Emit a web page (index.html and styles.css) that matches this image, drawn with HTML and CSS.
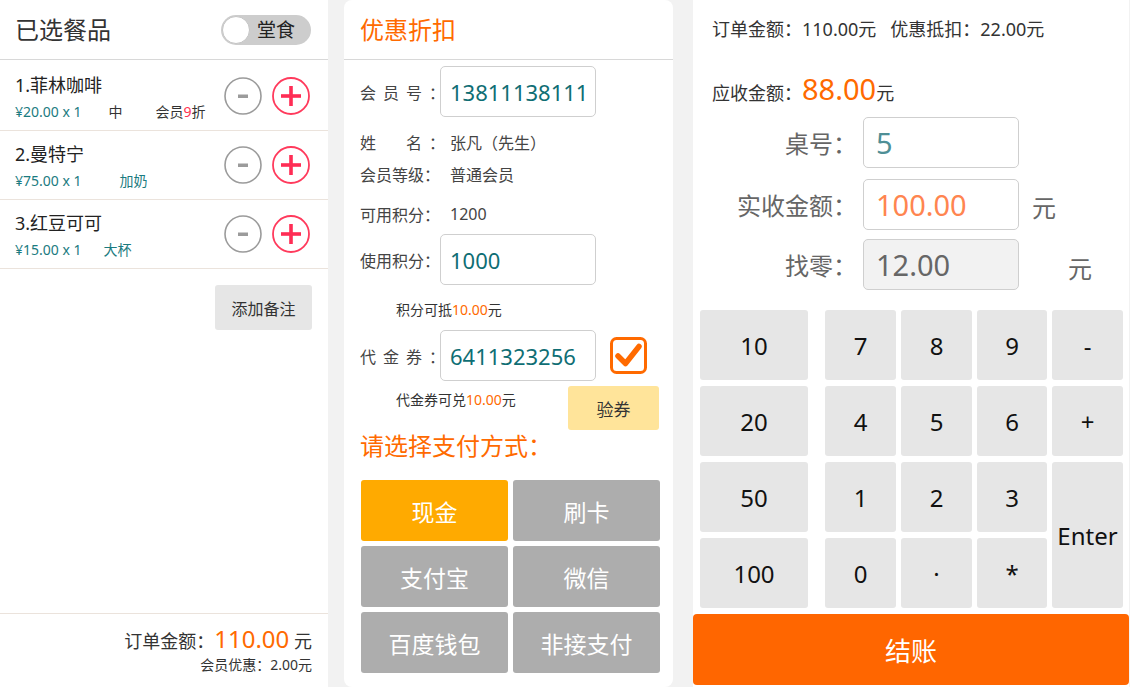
FILE: index.html
```html
<!DOCTYPE html>
<html lang="zh-CN">
<head>
<meta charset="utf-8">
<title>收银结账</title>
<link rel="stylesheet" href="styles.css">
</head>
<body>
<div class="app">
  <section class="panel cart">
    <header class="head">
      <h1 class="title">已选餐品</h1>
      <div class="toggle"><span class="knob"></span><span class="toggle-text">堂食</span></div>
    </header>
    <ul class="items">
      <li class="item">
        <div class="item-info">
          <div class="item-name">1.菲林咖啡</div>
          <div class="item-meta"><span class="price">¥20.00 x 1</span><span class="spec spec-dark">中</span><span class="vip">会员<em>9</em>折</span></div>
        </div>
        <div class="qty">
          <button class="circle minus"><svg width="38" height="38" viewBox="0 0 38 38"><circle cx="19" cy="19" r="18" fill="none" stroke="#9b9b9b" stroke-width="1.6"/><rect x="14" y="17.5" width="10" height="3.5" fill="#9b9b9b"/></svg></button>
          <button class="circle plus"><svg width="38" height="38" viewBox="0 0 38 38"><circle cx="19" cy="19" r="18" fill="none" stroke="#ff3a5c" stroke-width="1.8"/><rect x="9" y="17.2" width="20" height="3.6" fill="#ff2d55"/><rect x="17.2" y="9" width="3.6" height="20" fill="#ff2d55"/></svg></button>
        </div>
      </li>
      <li class="item">
        <div class="item-info">
          <div class="item-name">2.曼特宁</div>
          <div class="item-meta"><span class="price">¥75.00 x 1</span><span class="spec spec-wide">加奶</span></div>
        </div>
        <div class="qty">
          <button class="circle minus"><svg width="38" height="38" viewBox="0 0 38 38"><circle cx="19" cy="19" r="18" fill="none" stroke="#9b9b9b" stroke-width="1.6"/><rect x="14" y="17.5" width="10" height="3.5" fill="#9b9b9b"/></svg></button>
          <button class="circle plus"><svg width="38" height="38" viewBox="0 0 38 38"><circle cx="19" cy="19" r="18" fill="none" stroke="#ff3a5c" stroke-width="1.8"/><rect x="9" y="17.2" width="20" height="3.6" fill="#ff2d55"/><rect x="17.2" y="9" width="3.6" height="20" fill="#ff2d55"/></svg></button>
        </div>
      </li>
      <li class="item">
        <div class="item-info">
          <div class="item-name">3.红豆可可</div>
          <div class="item-meta"><span class="price">¥15.00 x 1</span><span class="spec spec-narrow">大杯</span></div>
        </div>
        <div class="qty">
          <button class="circle minus"><svg width="38" height="38" viewBox="0 0 38 38"><circle cx="19" cy="19" r="18" fill="none" stroke="#9b9b9b" stroke-width="1.6"/><rect x="14" y="17.5" width="10" height="3.5" fill="#9b9b9b"/></svg></button>
          <button class="circle plus"><svg width="38" height="38" viewBox="0 0 38 38"><circle cx="19" cy="19" r="18" fill="none" stroke="#ff3a5c" stroke-width="1.8"/><rect x="9" y="17.2" width="20" height="3.6" fill="#ff2d55"/><rect x="17.2" y="9" width="3.6" height="20" fill="#ff2d55"/></svg></button>
        </div>
      </li>
    </ul>
    <div class="note-row"><button class="note-btn">添加备注</button></div>
    <footer class="cart-foot">
      <div class="foot-total">订单金额<span class="colon">：</span><span class="foot-amount">110.00</span> 元</div>
      <div class="foot-vip">会员优惠<span class="colon">：</span>2.00元</div>
    </footer>
  </section>

  <section class="panel discount">
    <header class="head">
      <h2 class="title orange">优惠折扣</h2>
    </header>
    <div class="disc-body">
      <div class="frow first">
        <span class="flabel"><span class="ls">会员号</span>：</span>
        <input class="finput" type="text" value="13811138111" readonly>
      </div>
      <div class="irow gap9"><span class="ilabel"><span class="ls">姓　名</span>：</span><span>张凡（先生）</span></div>
      <div class="irow"><span class="ilabel">会员等级：</span><span>普通会员</span></div>
      <div class="irow gap8"><span class="ilabel">可用积分：</span><span>1200</span></div>
      <div class="frow gap4">
        <span class="flabel">使用积分：</span>
        <input class="finput" type="text" value="1000" readonly>
      </div>
      <div class="hint hint-points">积分可抵<span class="orange">10.00</span>元</div>
      <div class="frow gap6">
        <span class="flabel"><span class="ls">代金券</span>：</span>
        <input class="finput" type="text" value="6411323256" readonly>
        <span class="check"><svg width="37" height="37" viewBox="0 0 37 37"><rect x="1.5" y="1.5" width="34" height="34" rx="5" fill="none" stroke="#ff6a00" stroke-width="3"/><path d="M8 19 L15.5 26.5 L29 9.5" fill="none" stroke="#ff6a00" stroke-width="5.5" stroke-linecap="round" stroke-linejoin="round"/></svg></span>
      </div>
      <div class="voucher-row">
        <div class="hint">代金券可兑<span class="orange">10.00</span>元</div>
        <button class="verify-btn">验券</button>
      </div>
      <div class="pay-title orange">请选择支付方式：</div>
      <div class="pay-grid">
        <button class="pay active">现金</button>
        <button class="pay">刷卡</button>
        <button class="pay">支付宝</button>
        <button class="pay">微信</button>
        <button class="pay">百度钱包</button>
        <button class="pay">非接支付</button>
      </div>
    </div>
  </section>

  <section class="panel checkout">
    <div class="summary">订单金额<span class="colon">：</span>110.00元<span class="sum-gap">优惠抵扣<span class="colon">：</span>22.00元</span></div>
    <div class="due">应收金额<span class="colon">：</span><span class="due-amount">88.00</span>元</div>
    <div class="crow row-table">
      <span class="clabel">桌号<span class="colon">：</span></span>
      <input class="cinput table-no" type="text" value="5" readonly>
    </div>
    <div class="crow row-paid">
      <span class="clabel">实收金额<span class="colon">：</span></span>
      <input class="cinput paid" type="text" value="100.00" readonly>
      <span class="unit">元</span>
    </div>
    <div class="crow row-change">
      <span class="clabel">找零<span class="colon">：</span></span>
      <input class="cinput change" type="text" value="12.00" readonly>
      <span class="unit unit-far">元</span>
    </div>
    <div class="keypad">
      <button class="key fixed">10</button>
      <button class="key">7</button>
      <button class="key">8</button>
      <button class="key">9</button>
      <button class="key">-</button>
      <button class="key fixed">20</button>
      <button class="key">4</button>
      <button class="key">5</button>
      <button class="key">6</button>
      <button class="key">+</button>
      <button class="key fixed">50</button>
      <button class="key">1</button>
      <button class="key">2</button>
      <button class="key">3</button>
      <button class="key enter">Enter</button>
      <button class="key fixed">100</button>
      <button class="key">0</button>
      <button class="key">·</button>
      <button class="key">*</button>
    </div>
    <button class="pay-btn">结账</button>
  </section>
</div>
</body>
</html>
```

FILE: styles.css
```css
* { box-sizing: border-box; margin: 0; padding: 0; }
html, body { height: 100%; }
body {
  background: #f2f2f2;
  font-family: "Noto Sans", "Noto Sans CJK SC", sans-serif;
  color: #333;
  overflow: hidden;
}
button, input { font-family: inherit; }
button { border: none; cursor: pointer; }
ul { list-style: none; }

.app { display: flex; width: 1130px; height: 687px; }
.panel { background: #fff; height: 687px; }
.orange { color: #ff6a00; }
.colon { font-family: "Noto Sans CJK JP", "Noto Sans CJK SC", sans-serif; }

/* ---------- cart ---------- */
.cart { width: 328px; display: flex; flex-direction: column; }
.head {
  height: 60px;
  border-bottom: 1px solid #d8d8d8;
  display: flex;
  align-items: center;
  justify-content: space-between;
  padding: 0 17px 0 15px;
  flex: none;
}
.title { font-size: 24px; font-weight: normal; line-height: 30px; color: #333; }
.title.orange { color: #ff6a00; }

.toggle {
  width: 90px; height: 30px;
  border-radius: 15px;
  background: #cdcdcd;
  display: flex; align-items: center;
  padding-left: 1px;
}
.knob {
  width: 28px; height: 28px;
  border-radius: 50%;
  background: #fff;
  border: 1px solid #c4c4c4;
}
.toggle-text { font-size: 19px; line-height: 28px; margin-left: 7px; color: #222; }

.items { padding-top: 2px; }
.item {
  height: 69px;
  border-bottom: 1px solid #ebe3dc;
  display: flex;
  align-items: center;
  justify-content: space-between;
  padding: 0 18px 0 15px;
}
.item-info { align-self: flex-start; padding-top: 11px; }
.item-name { font-size: 18px; line-height: 24px; color: #222; }
.item-meta { font-size: 14px; line-height: 20px; margin-top: 5px; color: #333; white-space: nowrap; }
.price { color: #1b7b80; }
.spec { color: #1b7b80; }
.spec-dark { color: #333; margin-left: 27px; }
.spec-wide { margin-left: 38px; }
.spec-narrow { margin-left: 22px; }
.vip { margin-left: 33px; }
.vip em { font-style: normal; color: #ff3355; }

.qty { display: flex; gap: 10px; }
.circle { width: 38px; height: 38px; background: none; display: block; }
.circle svg { display: block; }

.note-row { display: flex; justify-content: flex-end; padding: 16px 16px 0 0; }
.note-btn {
  width: 97px; height: 45px;
  background: #e6e6e6;
  border-radius: 3px;
  font-size: 16px;
  color: #333;
}

.cart-foot {
  margin-top: auto;
  height: 74px;
  border-top: 1px solid #ebe3dc;
  padding: 11px 16px 0 0;
  text-align: right;
}
.foot-total { font-size: 18px; line-height: 28px; color: #333; }
.foot-amount { font-size: 24px; color: #ff6a00; }
.foot-vip { font-size: 14px; line-height: 18px; color: #333; }

/* ---------- discount ---------- */
.discount { width: 329px; margin-left: 16px; border-radius: 8px; display: flex; flex-direction: column; }
.discount .head { padding-left: 16px; }
.disc-body { padding: 0 14px 0 16px; display: flex; flex-direction: column; }

.frow { display: flex; align-items: center; height: 51px; }
.frow.first { margin-top: 6px; }
.gap4 { margin-top: 4px; }
.gap6 { margin-top: 6px; }
.gap8 { margin-top: 8px; }
.gap9 { margin-top: 9px; }
.flabel { width: 80px; flex: none; font-size: 16px; color: #444; white-space: nowrap; }
.ls { letter-spacing: 7px; }
.finput {
  width: 156px; height: 51px;
  border: 1px solid #cfcfcf;
  border-radius: 5px;
  padding-left: 9px;
  font-size: 22px;
  color: #0f6e74;
  background: #fff;
  outline: none;
}
.irow { display: flex; align-items: center; height: 32px; font-size: 16px; color: #444; }
.ilabel { width: 90px; flex: none; white-space: nowrap; }

.hint { font-size: 14px; line-height: 28px; color: #333; padding-left: 36px; }
.hint-points { margin-top: 11px; }
.check { margin-left: 14px; display: block; width: 37px; height: 37px; }
.check svg { display: block; }

.voucher-row { display: flex; justify-content: space-between; align-items: flex-start; margin-top: 5px; height: 44px; }
.verify-btn {
  width: 91px; height: 44px;
  background: #ffe49a;
  border-radius: 3px;
  font-size: 17px;
  color: #333;
}
.pay-title { font-size: 24px; line-height: 32px; }

.pay-grid {
  margin: 18px 0 0 1px;
  display: grid;
  grid-template-columns: 147px 147px;
  grid-auto-rows: 61px;
  gap: 5px;
}
.pay {
  background: #adadad;
  border-radius: 3px;
  color: #fff;
  font-size: 23px;
}
.pay.active { background: #ffaa00; }

/* ---------- checkout ---------- */
.checkout { width: 436px; margin-left: 20px; display: flex; flex-direction: column; }
.summary { margin: 16px 0 0 19px; font-size: 18px; line-height: 24px; color: #333; }
.sum-gap { margin-left: 14px; }
.due { margin: 28px 0 0 19px; font-size: 18px; line-height: 40px; height: 40px; color: #333; }
.due-amount { font-size: 29px; color: #ff6a00; }

.crow { display: flex; align-items: center; height: 51px; }
.row-table { margin-top: 8px; }
.row-paid { margin-top: 11px; }
.row-change { margin-top: 9px; }
.clabel { width: 164px; flex: none; text-align: right; font-size: 24px; color: #666; white-space: nowrap; }
.cinput {
  width: 156px; height: 51px;
  margin-left: 6px;
  border: 1px solid #cfcfcf;
  border-radius: 5px;
  padding-left: 12px;
  font-size: 29px;
  background: #fff;
  outline: none;
}
.table-no { color: #4f8f96; }
.paid { color: #ff8550; }
.change { color: #666; background: #f2f2f2; }
.unit { font-size: 24px; color: #666; margin-left: 13px; padding-top: 4px; }
.unit-far { margin-left: 49px; padding-top: 6px; }

.keypad {
  margin: 20px 0 0 7px;
  display: grid;
  grid-template-columns: 120px 71px 71px 70px 71px;
  grid-template-rows: repeat(4, 70px);
  column-gap: 5px;
  row-gap: 6px;
}
.key {
  background: #e6e6e6;
  border-radius: 3px;
  font-size: 24px;
  color: #111;
}
.key.fixed { width: 108px; }
.key.enter { grid-column: 5; grid-row: 3 / span 2; }

.pay-btn {
  margin-top: 6px;
  height: 71px;
  width: 436px;
  background: #ff6600;
  border-radius: 4px;
  color: #fff;
  font-size: 26px;
}
```
